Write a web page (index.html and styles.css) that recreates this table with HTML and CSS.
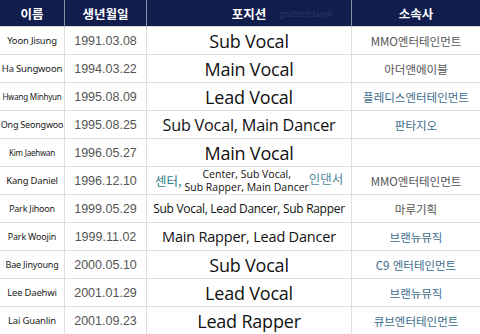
FILE: index.html
```html
<!DOCTYPE html>
<html lang="ko">
<head>
<meta charset="utf-8">
<link rel="stylesheet" href="styles.css">
</head>
<body>
<div class="table">
  <div class="hd">이름</div>
  <div class="hd">생년월일</div>
  <div class="hd hd-pos">포지션<span class="wm">goddefdanik</span></div>
  <div class="hd hd-last">소속사</div>

  <div class="c name">Yoon Jisung</div>
  <div class="c date">1991.03.08</div>
  <div class="c pos p20">Sub Vocal</div>
  <div class="c ag gray">MMO엔터테인먼트</div>

  <div class="c name">Ha Sungwoon</div>
  <div class="c date">1994.03.22</div>
  <div class="c pos p20">Main Vocal</div>
  <div class="c ag gray">아더앤에이블</div>

  <div class="c name n8">Hwang Minhyun</div>
  <div class="c date">1995.08.09</div>
  <div class="c pos p20">Lead Vocal</div>
  <div class="c ag blue">플레디스엔터테인먼트</div>

  <div class="c name n9">Ong Seongwoo</div>
  <div class="c date">1995.08.25</div>
  <div class="c pos p17">Sub Vocal, Main Dancer</div>
  <div class="c ag blue">판타지오</div>

  <div class="c name n8">Kim Jaehwan</div>
  <div class="c date">1996.05.27</div>
  <div class="c pos p20">Main Vocal</div>
  <div class="c ag"></div>

  <div class="c name">Kang Daniel</div>
  <div class="c date">1996.12.10</div>
  <div class="c pos mix">
    <span class="kr">센터,</span>
    <span class="stack"><span class="ln">Center, Sub Vocal,</span><span class="ln">Sub Rapper, Main Dancer</span></span>
    <span class="kr kr2">인댄서</span>
  </div>
  <div class="c ag gray">MMO엔터테인먼트</div>

  <div class="c name n9">Park Jihoon</div>
  <div class="c date">1999.05.29</div>
  <div class="c pos p13">Sub Vocal, Lead Dancer, Sub Rapper</div>
  <div class="c ag gray">마루기획</div>

  <div class="c name n9">Park Woojin</div>
  <div class="c date">1999.11.02</div>
  <div class="c pos p15">Main Rapper, Lead Dancer</div>
  <div class="c ag blue">브랜뉴뮤직</div>

  <div class="c name n9">Bae Jinyoung</div>
  <div class="c date">2000.05.10</div>
  <div class="c pos p20">Sub Vocal</div>
  <div class="c ag blue">C9 엔터테인먼트</div>

  <div class="c name">Lee Daehwi</div>
  <div class="c date">2001.01.29</div>
  <div class="c pos p20">Lead Vocal</div>
  <div class="c ag blue">브랜뉴뮤직</div>

  <div class="c name">Lai Guanlin</div>
  <div class="c date">2001.09.23</div>
  <div class="c pos p20">Lead Rapper</div>
  <div class="c ag blue">큐브엔터테인먼트</div>
</div>
</body>
</html>
```
FILE: styles.css
```css
html, body {
  margin: 0;
  padding: 0;
  background: #ffffff;
}
.table {
  display: grid;
  grid-template-columns: 65px 82px 205px 128px;
  grid-template-rows: 27px repeat(11, 28px);
  width: 480px;
  font-family: "Noto Sans", "Noto Sans CJK KR", sans-serif;
}
.hd {
  background: #111d4d;
  color: #ffffff;
  font-family: "Noto Sans CJK KR", sans-serif;
  font-weight: 700;
  font-size: 12.5px;
  display: flex;
  align-items: center;
  justify-content: center;
  border-right: 1px solid #8a90a8;
  border-bottom: 1px solid #d8d8d8;
  position: relative;
}
.hd-last { border-right: none; }
.wm {
  position: absolute;
  left: 132px;
  top: 7px;
  font-family: "Noto Sans", sans-serif;
  font-weight: 400;
  font-size: 9px;
  color: #2a3766;
}
.c {
  display: flex;
  align-items: center;
  justify-content: center;
  border-right: 1px solid #dedede;
  border-bottom: 1px solid #dedede;
  white-space: nowrap;
  overflow: hidden;
}
.ag { border-right: none; }
.name {
  font-size: 9.5px;
  letter-spacing: -0.2px;
  color: #1a1a1a;
  font-family: "Noto Sans", sans-serif;
}
.n9 { font-size: 9px; }
.n8 { font-size: 8px; }
.date {
  font-family: "Liberation Sans", Arial, sans-serif;
  font-size: 12.5px;
  color: #555555;
}
.pos {
  font-family: "Open Sans", "Noto Sans", sans-serif;
  color: #111111;
  letter-spacing: -0.2px;
}
.p20 { font-size: 18px; }
.p17 { font-size: 16.2px; }
.p15 { font-size: 14.5px; }
.p13 { font-size: 12px; letter-spacing: -0.3px; }
.mix {
  justify-content: flex-start;
  padding-left: 8px;
  gap: 3px;
  letter-spacing: 0;
}
.mix .kr {
  font-family: "Noto Sans CJK KR", sans-serif;
  font-size: 12.5px;
  color: #2f7a86;
}
.mix .kr2 {
  margin-left: -3px;
  margin-bottom: 4px;
  color: #4f8aa0;
}
.mix .stack {
  display: flex;
  flex-direction: column;
  align-items: center;
  font-size: 10.5px;
  line-height: 13px;
  color: #111111;
}
.ag {
  font-family: "Noto Sans CJK KR", sans-serif;
  font-size: 11.5px;
}
.gray { color: #555555; }
.blue { color: #3b6c8c; }
```
